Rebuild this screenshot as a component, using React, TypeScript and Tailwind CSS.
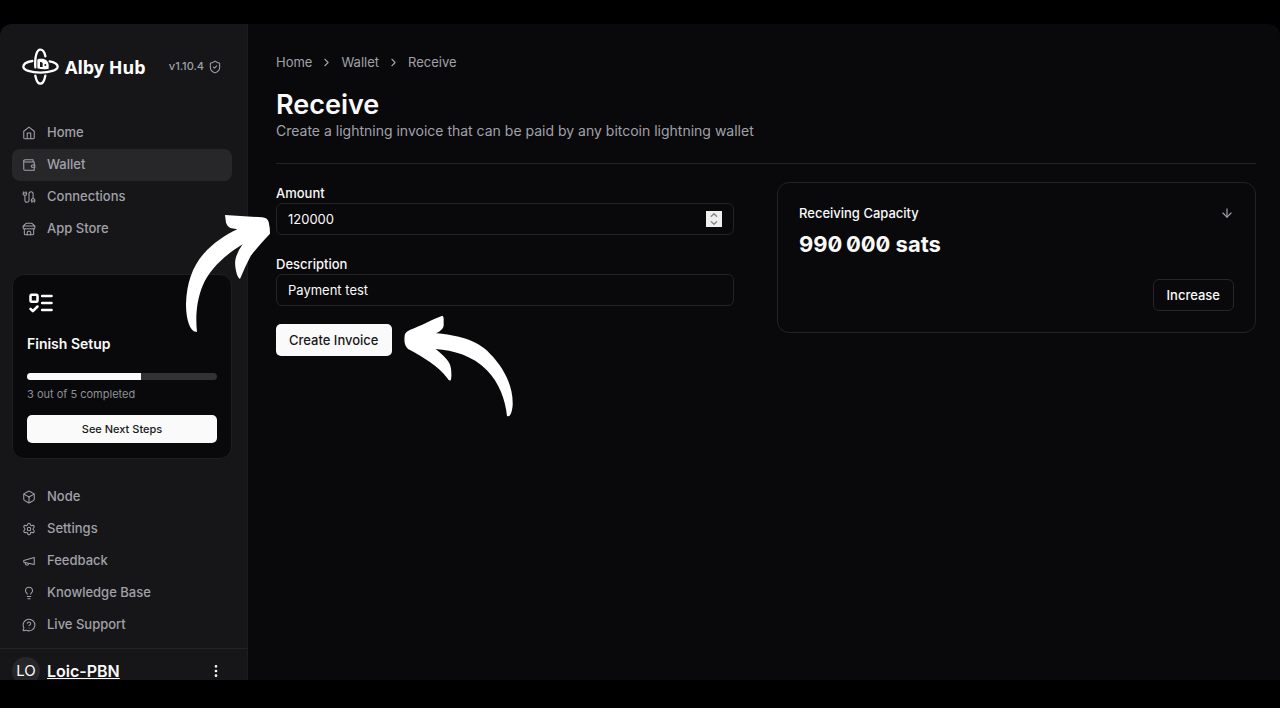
import type { ReactNode } from 'react';
import { ArrowDown, Box, ChevronRight, EllipsisVertical, Lightbulb, MessageCircleQuestionMark, Settings, ShieldCheck } from 'lucide-react';

function Icon({ children, className = 'size-[14px]', strokeWidth = 1.8 }: { children: ReactNode; className?: string; strokeWidth?: number }) {
  return (
    <svg
      viewBox="0 0 24 24"
      fill="none"
      stroke="currentColor"
      strokeWidth={strokeWidth}
      strokeLinecap="round"
      strokeLinejoin="round"
      className={className}
      aria-hidden="true"
    >
      {children}
    </svg>
  );
}

const HomeIcon = () => (
  <Icon>
    <path d="m3 9 9-7 9 7v11a2 2 0 0 1-2 2H5a2 2 0 0 1-2-2zM9 22V12h6v10" />
  </Icon>
);

const WalletIcon = () => (
  <Icon>
    <path d="M21 12V7H5a2 2 0 0 1 0-4h14v4" />
    <path d="M3 5v14a2 2 0 0 0 2 2h16v-5" />
    <path d="M18 12a2 2 0 0 0 0 4h4v-4Z" />
  </Icon>
);

const CableIcon = () => (
  <Icon>
    <path d="M4 9a2 2 0 0 1-2-2V5h6v2a2 2 0 0 1-2 2ZM3 5V3M7 5V3" />
    <path d="M19 15V6.5a3.5 3.5 0 0 0-7 0v11a3.5 3.5 0 0 1-7 0V9" />
    <path d="M17 21v-2M21 21v-2M22 19h-6v-2a2 2 0 0 1 2-2h2a2 2 0 0 1 2 2Z" />
  </Icon>
);

const StoreIcon = () => (
  <Icon>
    <path d="m2 7 4.41-4.41A2 2 0 0 1 7.83 2h8.34a2 2 0 0 1 1.42.59L22 7M2 7h20" />
    <path d="M4 12v8a2 2 0 0 0 2 2h12a2 2 0 0 0 2-2v-8" />
    <path d="M15 22v-4a2 2 0 0 0-2-2h-2a2 2 0 0 0-2 2v4" />
    <path d="M22 7v3a2 2 0 0 1-2 2a2.7 2.7 0 0 1-1.59-.63.7.7 0 0 0-.82 0A2.7 2.7 0 0 1 16 12a2.7 2.7 0 0 1-1.59-.63.7.7 0 0 0-.82 0A2.7 2.7 0 0 1 12 12a2.7 2.7 0 0 1-1.59-.63.7.7 0 0 0-.82 0A2.7 2.7 0 0 1 8 12a2.7 2.7 0 0 1-1.59-.63.7.7 0 0 0-.82 0A2.7 2.7 0 0 1 4 12a2 2 0 0 1-2-2V7" />
  </Icon>
);

const MegaphoneIcon = () => (
  <Icon>
    <path d="m3 11 18-5v12L3 14v-3z" />
    <path d="M11.6 16.8a3 3 0 1 1-5.8-1.6" />
  </Icon>
);

function NavItem({ icon, label, active = false }: { icon: ReactNode; label: string; active?: boolean }) {
  return (
    <a
      href="#"
      aria-current={active ? 'page' : undefined}
      className={
        active
          ? 'flex h-8 items-center gap-[11px] rounded-lg bg-[#27272a] px-[10px] text-[13px] font-medium text-[#a1a1aa]'
          : 'flex h-8 items-center gap-[11px] rounded-lg px-[10px] text-[13px] font-medium text-[#a1a1aa]'
      }
    >
      {icon}
      {label}
    </a>
  );
}

function Logo() {
  return (
    <svg viewBox="0 0 111 111" className="size-[37px]" fill="none" stroke="#fff" strokeWidth="7" strokeLinecap="round" aria-hidden="true">
      <path d="M40 58C38 26 44 5 55 5c8 0 13 9 15 20" />
      <path d="M40 83c3 15 8 24 15 24s12-9 15-24" />
      <path d="M31 39C14 42 4 48 4 56c0 10 23 18 51 18s52-8 52-18c0-7-9-13-24-16" />
      <path d="M46 61V37q0-5 5-5h7c13 0 22 8 22 20v10q-16 4-34-1z" fill="#fff" stroke="none" />
      <path d="M54 57V42q5-1 8 3v12z" fill="#161618" stroke="none" />
      <circle cx="70" cy="51" r="3" fill="#161618" stroke="none" />
    </svg>
  );
}

function Sidebar() {
  return (
    <aside className="flex w-[248px] shrink-0 flex-col border-r border-[#1d1d20] bg-[#161618] pt-6">
      <div className="flex items-center pl-[22px] pr-[25px]">
        <Logo />
        <span className="ml-[6px] font-['Noto_Sans',sans-serif] text-[18px] font-bold leading-6 text-white">Alby Hub</span>
        <span className="ml-auto flex items-center gap-1 text-[11px] font-medium text-[#a1a1aa]">
          v1.10.4
          <ShieldCheck className="size-[14px]" strokeWidth={1.8} />
        </span>
      </div>

      <nav className="mt-8 flex flex-col pl-3 pr-[15px]">
        <NavItem icon={<HomeIcon />} label="Home" />
        <NavItem icon={<WalletIcon />} label="Wallet" active />
        <NavItem icon={<CableIcon />} label="Connections" />
        <NavItem icon={<StoreIcon />} label="App Store" />
      </nav>

      <section className="ml-3 mr-[15px] mt-[29px] rounded-xl border border-[#1f1f22] bg-[#09090b] px-[14px] pb-[15px] pt-[14px]">
        <Icon className="size-7 text-white" strokeWidth={2.2}>
          <rect x="3" y="5" width="6" height="6" rx="1" />
          <path d="m3 17 2 2 4-4M13 6h8M13 12h8M13 18h8" />
        </Icon>
        <h2 className="mt-[17px] text-[14px] font-semibold leading-5 text-[#fafafa]">Finish Setup</h2>
        <div
          role="progressbar"
          aria-label="Setup"
          aria-valuenow={60}
          className="mt-[19px] h-[7px] overflow-hidden rounded-full bg-[#323235]"
        >
          <div className="h-full w-3/5 bg-[#fafafa]" />
        </div>
        <p className="mt-[7px] text-[11px] leading-[14px] text-[#8f8f98]">3 out of 5 completed</p>
        <button type="button" className="mt-[14px] h-7 w-full rounded-[5px] bg-[#fafafa] pt-px text-[11px] font-medium text-[#18181b]">
          See Next Steps
        </button>
      </section>

      <nav className="mt-[22px] flex flex-col pl-3 pr-[15px]">
        <NavItem icon={<Box className="size-[14px]" strokeWidth={1.8} />} label="Node" />
        <NavItem icon={<Settings className="size-[14px]" strokeWidth={1.8} />} label="Settings" />
        <NavItem icon={<MegaphoneIcon />} label="Feedback" />
        <NavItem icon={<Lightbulb className="size-[14px]" strokeWidth={1.8} />} label="Knowledge Base" />
        <NavItem icon={<MessageCircleQuestionMark className="size-[14px]" strokeWidth={1.8} />} label="Live Support" />
      </nav>

      <div className="mt-[7px] flex items-center border-t border-[#232326] px-3 pt-2">
        <span className="flex size-7 shrink-0 items-center justify-center rounded-full bg-[#27272a] text-[15px] leading-4 text-[#fafafa]">
          LO
        </span>
        <a href="#" className="ml-[7px] text-[16px] font-semibold leading-4 text-[#fafafa] underline">
          Loic-PBN
        </a>
        <button type="button" aria-label="Account menu" className="ml-auto mr-[11px] text-[#fafafa]">
          <EllipsisVertical className="size-4" />
        </button>
      </div>
    </aside>
  );
}

function Breadcrumbs() {
  return (
    <nav aria-label="Breadcrumb" className="flex items-center gap-2 text-[13px] leading-5 text-[#a1a1aa]">
      <a href="#">Home</a>
      <ChevronRight className="size-[13px]" />
      <a href="#">Wallet</a>
      <ChevronRight className="size-[13px]" />
      <span>Receive</span>
    </nav>
  );
}

function InvoiceForm() {
  return (
    <form className="flex flex-col items-start pr-[21px] pt-px">
      <label htmlFor="amount" className="text-[13px] font-medium leading-5 text-[#fafafa]">
        Amount
      </label>
      <div className="flex h-8 w-full items-center rounded-md border border-[#232326] px-[11px]">
        <input
          id="amount"
          type="number"
          defaultValue={120000}
          className="h-full min-w-0 flex-1 bg-transparent text-[13px] text-[#fafafa] outline-none [&::-webkit-inner-spin-button]:appearance-none"
        />
        <span className="size-4 bg-[#efefef] text-[#858585]">
          <Icon className="size-4" strokeWidth={2}>
            <path d="m8 8 4-4 4 4M8 16l4 4 4-4" />
          </Icon>
        </span>
      </div>
      <label htmlFor="description" className="mt-[19px] text-[13px] font-medium leading-5 text-[#fafafa]">
        Description
      </label>
      <input
        id="description"
        type="text"
        defaultValue="Payment test"
        className="h-8 w-full rounded-md border border-[#232326] bg-transparent px-[11px] text-[13px] text-[#fafafa]"
      />
      <button type="button" className="mt-[18px] h-8 rounded-[5px] bg-[#fafafa] px-[13px] pt-px text-[13px] font-medium text-[#18181b]">
        Create Invoice
      </button>
    </form>
  );
}

function CapacityCard() {
  return (
    <section className="flex flex-col rounded-xl border border-[#232326] p-[21px]">
      <div className="flex items-center justify-between">
        <h2 className="text-[13px] font-medium leading-[18px] text-[#fafafa]">Receiving Capacity</h2>
        <ArrowDown className="size-[14px] text-[#a1a1aa]" />
      </div>
      <p className="mt-2 text-[22px] font-bold leading-7 slashed-zero text-[#fafafa]">990{'\u2009'}000 sats</p>
      <button
        type="button"
        className="mt-[21px] h-8 self-end rounded-md border border-[#27272a] px-[13px] pt-px text-[13px] font-medium text-[#fafafa]"
      >
        Increase
      </button>
    </section>
  );
}

function PointerArrows() {
  return (
    <>
      <svg viewBox="0 0 360 420" className="pointer-events-none absolute left-[170px] top-[200px] h-[140px] w-[120px]" fill="#fff" aria-hidden="true">
        <path d="M165 45L276 52Q292 53 296 66Q300 82 300 101Q263 140 242 168Q225 200 210 237Q202 232 198 212Q194 196 196 180Q200 158 218 133C168 163 120 205 98 257C80 300 76 350 81 396L71 394C54 380 48 345 48 312C50 250 67 200 101 161C130 129 164 106 202 88L181 84Q172 80 168 68Z" />
      </svg>
      <svg viewBox="0 0 420 375" className="pointer-events-none absolute left-[390px] top-[305px] h-[125px] w-[140px]" fill="#fff" aria-hidden="true">
        <path d="M157 32Q161 33 161 42V62Q159 75 138 85C200 90 262 104 300 146C344 190 370 246 368 300C366 324 360 338 351 333C346 284 328 234 290 195C248 152 190 136 137 132Q163 153 174 168Q185 184 184 207Q185 220 181 227Q176 227 171 218C145 183 100 157 60 135Q47 129 44 113Q42 98 45 87Q49 79 59 75C96 61 128 42 157 32Z" />
      </svg>
    </>
  );
}

export default function App() {
  return (
    <div className="relative flex h-screen flex-col overflow-hidden bg-black pb-7 pt-6 font-['Inter',sans-serif]">
      <div className="flex min-h-0 flex-1 overflow-hidden rounded-t-xl bg-[#09090b]">
        <Sidebar />
        <main className="flex-1 pl-7 pr-6 pt-7">
          <Breadcrumbs />
          <h1 className="mt-[17px] text-[27px] font-semibold leading-8 text-[#fafafa]">Receive</h1>
          <p className="text-[14px] leading-5 text-[#a1a1aa]">
            Create a lightning invoice that can be paid by any bitcoin lightning wallet
          </p>
          <hr className="mb-[18px] mt-[22px] border-[#232326]" />
          <div className="grid grid-cols-2 items-start gap-[22px]">
            <InvoiceForm />
            <CapacityCard />
          </div>
        </main>
      </div>
      <PointerArrows />
    </div>
  );
}
